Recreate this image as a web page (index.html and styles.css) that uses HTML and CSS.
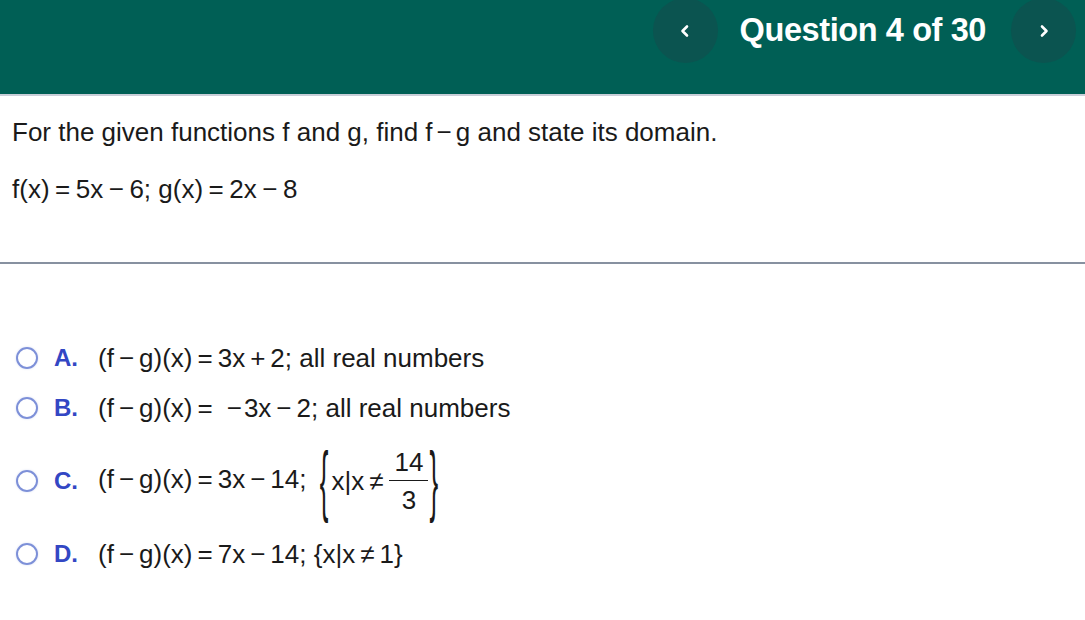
FILE: index.html
```html
<!DOCTYPE html>
<html>
<head>
<meta charset="utf-8">
<link rel="stylesheet" href="styles.css">
</head>
<body>
<header class="topbar">
  <div class="nav">
    <button class="navbtn" aria-label="Previous">
      <svg width="12" height="14" viewBox="0 0 12 14"><path d="M8 2.5 L3.5 7 L8 11.5" fill="none" stroke="#fff" stroke-width="2.6" stroke-linecap="round" stroke-linejoin="round"/></svg>
    </button>
    <div class="qtitle">Question 4 of 30</div>
    <button class="navbtn" aria-label="Next">
      <svg width="12" height="14" viewBox="0 0 12 14"><path d="M4 2.5 L8.5 7 L4 11.5" fill="none" stroke="#fff" stroke-width="2.6" stroke-linecap="round" stroke-linejoin="round"/></svg>
    </button>
  </div>
</header>
<section class="question">
  <p class="prompt">For the given functions f and g, find f<span class="op">−</span>g and state its domain.</p>
  <p class="given">f(x)<span class="op">=</span>5x<span class="op">−</span>6; g(x)<span class="op">=</span>2x<span class="op">−</span>8</p>
</section>
<section class="answers">
  <div class="opt opt-a">
    <span class="radio"></span><span class="letter">A.</span>
    <span class="expr">(f<span class="op">−</span>g)(x)<span class="op">=</span>3x<span class="op">+</span>2; all real numbers</span>
  </div>
  <div class="opt opt-b">
    <span class="radio"></span><span class="letter">B.</span>
    <span class="expr">(f<span class="op">−</span>g)(x)<span class="op">=</span><span class="op neg">−</span>3x<span class="op">−</span>2; all real numbers</span>
  </div>
  <div class="opt opt-c">
    <span class="radio"></span><span class="letter">C.</span>
    <span class="expr">(f<span class="op">−</span>g)(x)<span class="op">=</span>3x<span class="op">−</span>14; <span class="set"><span class="brace">{</span><span class="setin">x|x<span class="op">≠</span></span><span class="frac"><span class="num">14</span><span class="den">3</span></span><span class="brace">}</span></span></span>
  </div>
  <div class="opt opt-d">
    <span class="radio"></span><span class="letter">D.</span>
    <span class="expr">(f<span class="op">−</span>g)(x)<span class="op">=</span>7x<span class="op">−</span>14; {x|x<span class="op">≠</span>1}</span>
  </div>
</section>
</body>
</html>
```
FILE: styles.css
```css
* { box-sizing: border-box; }
html, body { margin: 0; padding: 0; background: #fff; }
body {
  font-family: "Liberation Sans", Arial, sans-serif;
  color: #1a1a1a;
  width: 1085px;
  height: 620px;
  overflow: hidden;
}
.topbar {
  height: 96px;
  background: #005f55;
  border-bottom: 2px solid #c9ced8;
  display: flex;
  justify-content: flex-end;
}
.nav {
  display: flex;
  align-items: flex-start;
  margin-top: -2px;
  margin-right: 9px;
}
.navbtn {
  width: 65px;
  height: 65px;
  border-radius: 50%;
  border: none;
  background: #0b5450;
  display: flex;
  align-items: center;
  justify-content: center;
  padding: 0;
  flex: none;
}
.qtitle {
  color: #fff;
  font-weight: bold;
  font-size: 32.5px;
  line-height: 65px;
  padding: 0 25px 0 22px;
  letter-spacing: -0.4px;
  white-space: nowrap;
}
.op { margin: 0 5px; }
.question {
  padding: 0 12px;
  height: 168px;
  border-bottom: 2px solid #8791a0;
}
.prompt {
  margin: 0;
  padding-top: 19px;
  font-size: 26px;
  line-height: 34px;
  white-space: nowrap;
}
.prompt .op { margin: 0 4px; }
.given {
  margin: 0;
  padding-top: 23px;
  font-size: 26px;
  line-height: 34px;
  white-space: nowrap;
}
.given .op { margin: 0 5.5px; }
.answers {
  padding: 0 16px;
}
.opt {
  display: flex;
  align-items: center;
  font-size: 26px;
  white-space: nowrap;
}
.opt-a { margin-top: 77px; height: 34px; }
.opt-b { margin-top: 16px; height: 34px; }
.opt-c { margin-top: 16px; height: 80px; }
.opt-d { margin-top: 16px; height: 34px; }
.radio {
  width: 22px;
  height: 22px;
  border-radius: 50%;
  border: 2px solid #7d90d8;
  box-shadow: 0 0 2px rgba(125,144,216,0.35);
  flex: none;
}
.letter {
  color: #3347c4;
  font-weight: bold;
  font-size: 24px;
  margin-left: 16px;
  width: 44px;
  flex: none;
}
.expr { display: inline-block; }
.op.neg { margin-left: 9px; margin-right: 2px; }
.set {
  display: inline-flex;
  align-items: center;
  vertical-align: middle;
  margin-left: 5px;
}
.brace {
  display: inline-block;
  font-size: 26px;
  transform: scaleY(3.0);
  margin: 0 1px;
}
.setin { margin-left: 2px; }
.setin .op { margin: 0 6px 0 5px; }
.frac {
  display: inline-flex;
  flex-direction: column;
  align-items: center;
}
.num { border-bottom: 1.5px solid #1a1a1a; padding: 0 5px 5px; line-height: 26px; }
.den { padding-top: 6px; line-height: 26px; }
```
